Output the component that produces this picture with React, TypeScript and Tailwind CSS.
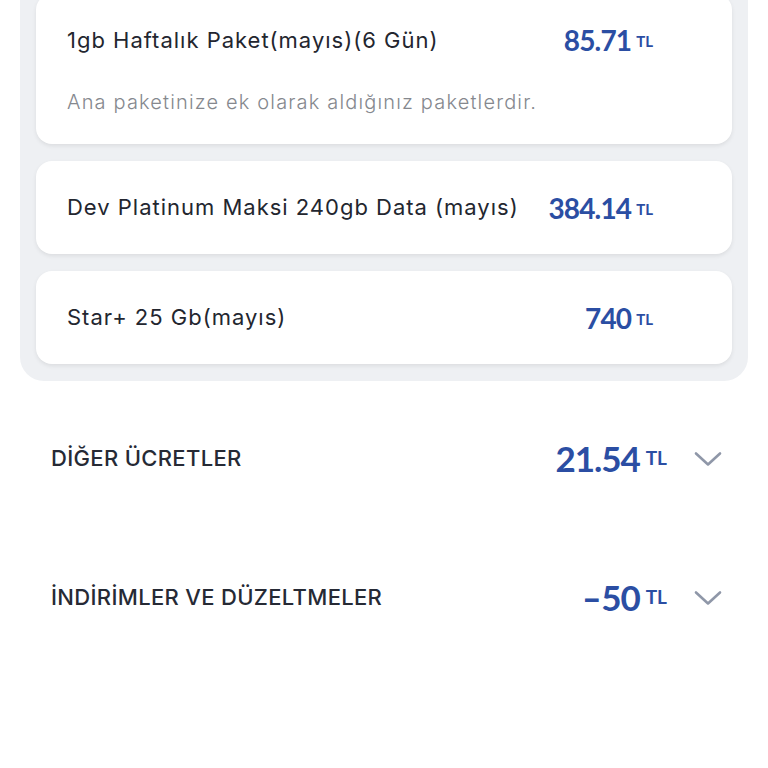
import React from "react";

type Pkg = { name: string; amount: string; note?: string };

const PACKAGES: Pkg[] = [
  {
    name: "1gb Haftalık Paket(mayıs)(6 Gün)",
    amount: "85.71",
    note: "Ana paketinize ek olarak aldığınız paketlerdir.",
  },
  { name: "Dev Platinum Maksi 240gb Data (mayıs)", amount: "384.14" },
  { name: "Star+ 25 Gb(mayıs)", amount: "740" },
];

const SECTIONS = [
  { title: "DİĞER ÜCRETLER", amount: "21.54" },
  { title: "İNDİRİMLER VE DÜZELTMELER", amount: "-50" },
];

function Amount({ value }: { value: string }) {
  return (
    <div className="flex items-baseline text-[#2b4ea3] font-[Lato,sans-serif]">
      <span className="text-[28px] font-bold tracking-[-0.03em] leading-none">{value}</span>
      <span className="ml-[5px] text-[15px] font-bold leading-none relative -top-[4px]">TL</span>
    </div>
  );
}

function Chevron() {
  return (
    <svg width="28" height="16" viewBox="0 0 28 16" fill="none">
      <path d="M2 2.5 L14 13.5 L26 2.5" stroke="#8f97a8" strokeWidth="2.6" strokeLinecap="round" strokeLinejoin="round" />
    </svg>
  );
}

export default function App() {
  return (
    <div className="min-h-screen bg-white overflow-hidden font-[Inter,sans-serif]">
      <div className="mx-[20px] -mt-[22px] rounded-b-[24px] bg-[#eef0f3] px-[16px] pt-[16px] pb-[17px] flex flex-col gap-[17px]">
        {PACKAGES.map((p) =>
          p.note ? (
            <div key={p.name} className="rounded-[16px] bg-white shadow-[0_2px_4px_rgba(0,0,0,0.08)] pl-[31px] pr-[79px] pt-[33px] pb-[30px]">
              <div className="flex items-center justify-between h-[26px]">
                <span className="text-[22px] text-[#23262f] tracking-[0.045em]">{p.name}</span>
                <Amount value={p.amount} />
              </div>
              <div className="mt-[37px] h-[24px] flex items-center text-[20px] font-light text-[#85888e] tracking-[0.058em]">{p.note}</div>
            </div>
          ) : (
            <div key={p.name} className="h-[93px] rounded-[16px] bg-white shadow-[0_2px_4px_rgba(0,0,0,0.08)] pl-[31px] pr-[79px] flex items-center justify-between">
              <span className="text-[22px] text-[#23262f] tracking-[0.045em]">{p.name}</span>
              <Amount value={p.amount} />
            </div>
          )
        )}
      </div>

      <div className="mt-[8px] flex flex-col">
        {SECTIONS.map((s) => (
          <div key={s.title} className="h-[139px] pl-[51px] pr-[46px] flex items-center">
            <span className="flex-1 text-[22px] font-medium text-[#262a35] tracking-[0.015em]">{s.title}</span>
            <div className="flex items-baseline text-[#2b4ea3] font-[Lato,sans-serif]">
              <span className="text-[35px] font-bold tracking-[-0.03em] leading-none">
                {s.amount.startsWith("-") ? (
                  <>
                    <span className="inline-block w-[20px] text-center scale-x-150">-</span>
                    {s.amount.slice(1)}
                  </>
                ) : (
                  s.amount
                )}
              </span>
              <span className="ml-[6px] text-[19px] font-bold leading-none relative -top-[7px]">TL</span>
            </div>
            <div className="ml-[27px]">
              <Chevron />
            </div>
          </div>
        ))}
      </div>
    </div>
  );
}
